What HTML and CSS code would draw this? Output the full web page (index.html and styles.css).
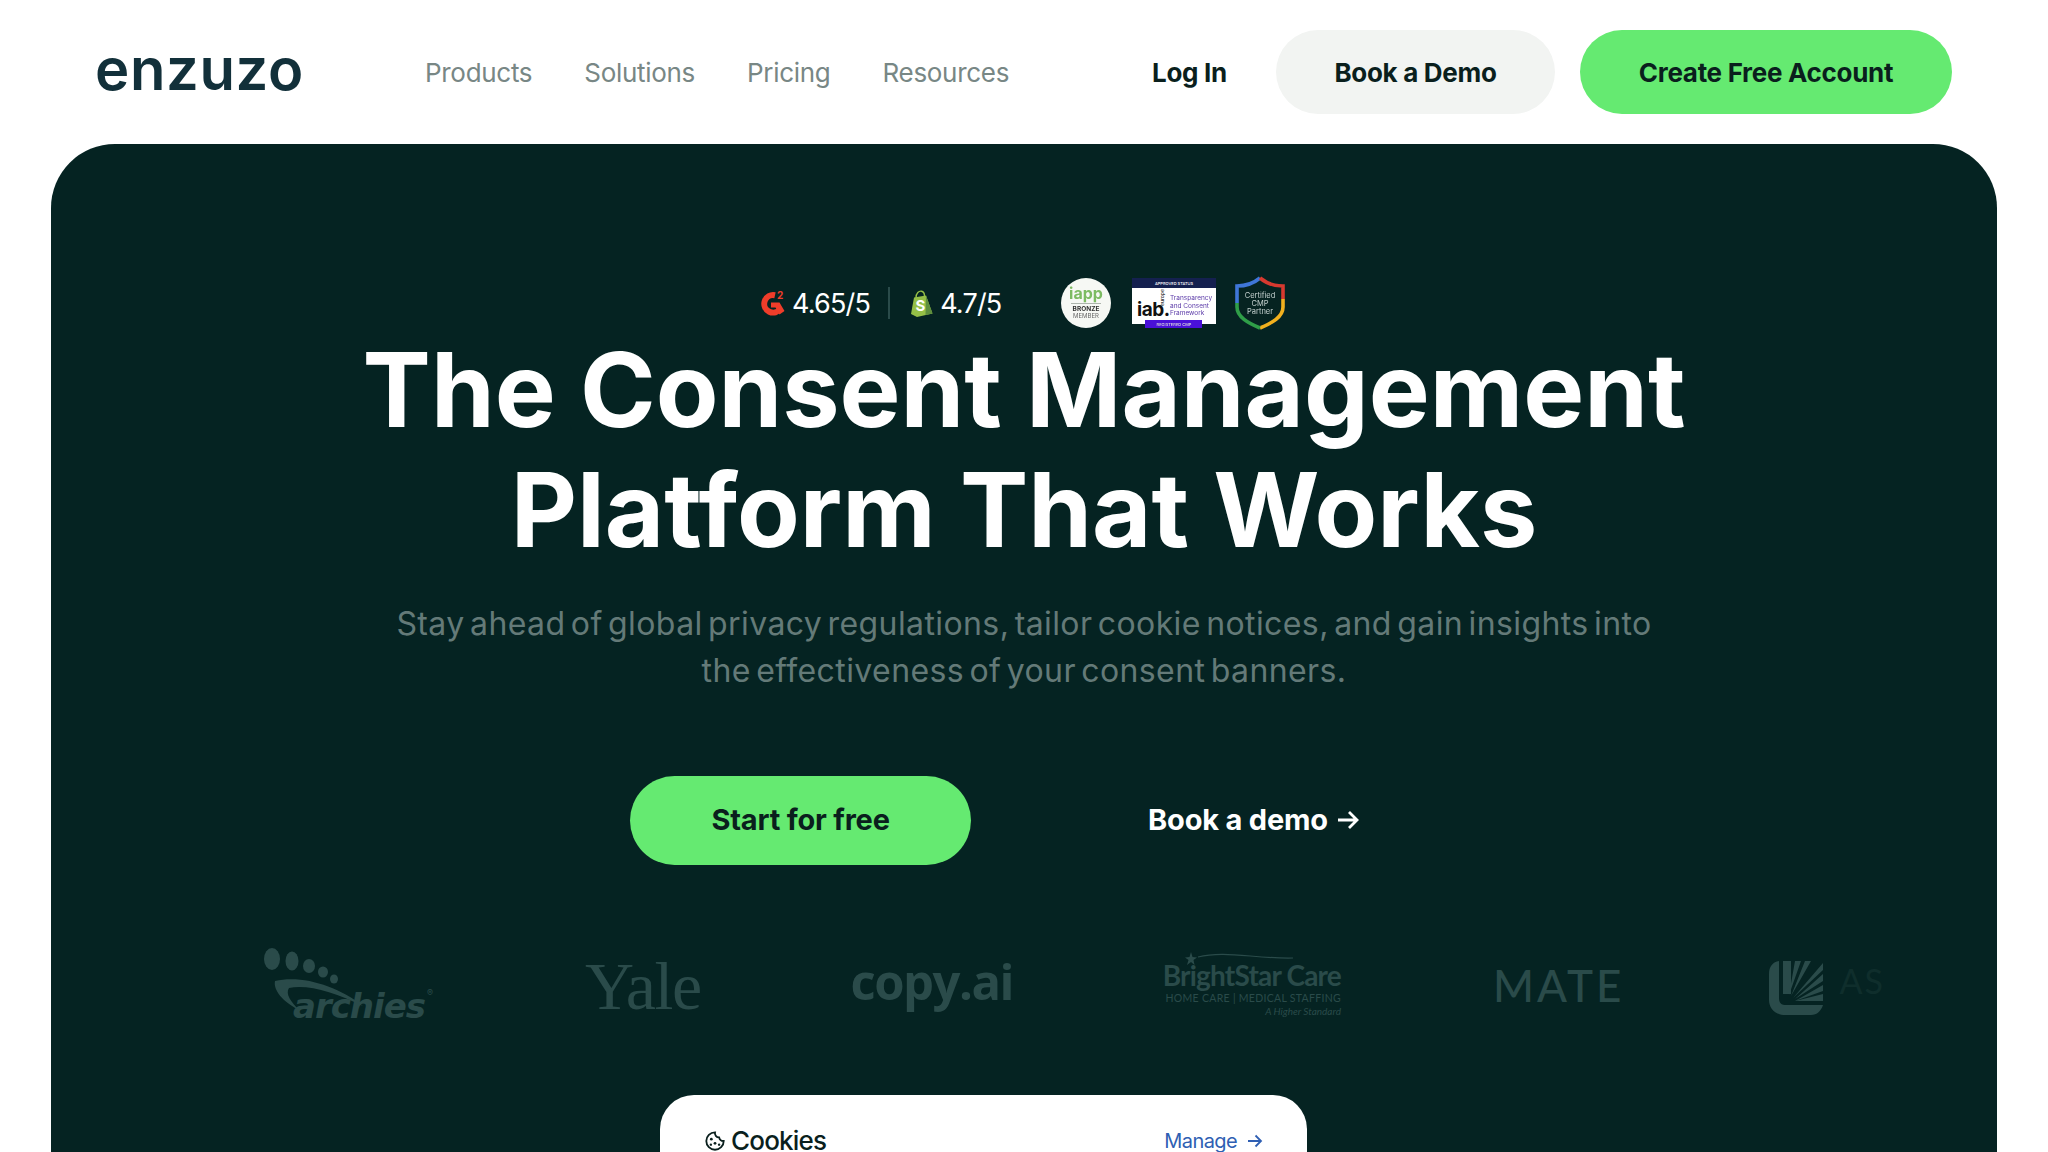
FILE: index.html
```html
<!DOCTYPE html>
<html lang="en">
<head>
<meta charset="utf-8">
<title>Enzuzo</title>
<link rel="stylesheet" href="styles.css">
</head>
<body>
<header class="topbar">
  <a class="logo">enzuzo</a>
  <nav class="mainnav">
    <a>Products</a><a>Solutions</a><a>Pricing</a><a>Resources</a>
  </nav>
  <div class="actions">
    <a class="login">Log In</a>
    <a class="pill pill-grey">Book a Demo</a>
    <a class="pill pill-green">Create Free Account</a>
  </div>
</header>
<main class="hero">
  <div class="ratings">
    <svg class="g2" viewBox="0 0 26 26"><path d="M15 5.200A8.800 8.800 0 1 0 20.500 18.500" fill="none" stroke="#ef3d2a" stroke-width="6"/><path d="M11 12.500h8.500l5 8.500-5 3.500-4-7h-4.500Z" fill="#ef3d2a"/><text x="17" y="9" class="g2-two">2</text></svg>
    <span class="score">4.65/5</span>
    <span class="divider"></span>
    <svg class="shop" viewBox="0 0 24 27"><path d="M2 24 5 7.500 17 5.500 23.500 23.500 8 27Z" fill="#95bf47"/><path d="M17 5.500 23.500 23.500 16.500 25Z" fill="#5e8e3e"/><path d="M7 8C7 3 10 .8 12.500 1.200 15 1.600 15.500 4 15.500 6" fill="none" stroke="#95bf47" stroke-width="1.400"/><text x="6.500" y="21" class="shop-s">S</text></svg>
    <span class="score score-shop">4.7/5</span>
    <svg class="badge iapp" viewBox="0 0 50 50"><circle cx="25" cy="25" r="25" fill="#f6f8f4"/><text x="25" y="21" class="iapp-name">iapp</text><path d="M10 25.500H40" stroke="#9aa39a" stroke-width=".8"/><text x="25" y="33" class="iapp-tier">BRONZE</text><text x="25" y="40" class="iapp-member">MEMBER</text></svg>
    <svg class="badge iab" viewBox="0 0 84 50"><rect width="84" height="10" fill="#14204f"/><text x="42" y="7" class="iab-top">APPROVED STATUS</text><rect y="10" width="84" height="36" fill="#fff"/><text x="5" y="38" class="iab-mark">iab.</text><text x="0" y="0" class="iab-eu" transform="translate(32 28) rotate(-90)">europe</text><text x="38" y="22" class="iab-tcf">Transparency</text><text x="38" y="29.500" class="iab-tcf">and Consent</text><text x="38" y="37" class="iab-tcf">Framework</text><rect x="13" y="42" width="57" height="8" fill="#4a10d8"/><text x="42" y="47.500" class="iab-reg">REGISTERED CMP</text></svg>
    <svg class="badge shield" viewBox="0 0 52 56"><path d="M26 3C20 8 12 11 3 11V32C3 42 14 48 26 53 38 48 49 42 49 32V11C40 11 32 8 26 3Z" fill="#062321"/><g fill="none" stroke-width="3.600"><path d="M26 3C20 8 12 11 3 11V28" stroke="#3f76d8"/><path d="M26 3C32 8 40 11 49 11V24" stroke="#d8392f"/><path d="M49 24V32C49 42 38 48 26 53" stroke="#f2b01e"/><path d="M3 28V32C3 42 14 48 26 53" stroke="#2f9e48"/></g><text x="26" y="23" class="shield-t">Certified</text><text x="26" y="31" class="shield-t">CMP</text><text x="26" y="39" class="shield-t">Partner</text></svg>
  </div>
  <h1 class="headline">The Consent Management<br>Platform That Works</h1>
  <p class="lede">Stay ahead of global privacy regulations, tailor cookie notices, and gain insights into<br>the effectiveness of your consent banners.</p>
  <div class="cta">
    <a class="start">Start for free</a>
    <a class="demo">Book a demo <svg class="demo-arrow" viewBox="0 0 24 22"><path d="M2 11H21M13 3l8 8-8 8" fill="none" stroke="#fff" stroke-width="2.800"/></svg></a>
  </div>
  <div class="logos">
    <svg class="l-archies" viewBox="0 0 172 76">
      <ellipse cx="9" cy="11" rx="8" ry="11"/><ellipse cx="29" cy="13" rx="6.500" ry="9.500"/><ellipse cx="46" cy="18" rx="6" ry="7"/><ellipse cx="60" cy="24" rx="5" ry="5.500"/><ellipse cx="71" cy="31" rx="4" ry="4.500"/>
      <path d="M12 33C40 27 74 38 100 58 72 44 44 36 26 40 22 46 28 54 36 62 20 54 10 42 12 33Z"/>
      <text x="30" y="70" class="archies-t">archies</text>
      <text x="164" y="48" class="archies-r">®</text>
    </svg>
    <span class="l-yale">Yale</span>
    <span class="l-copy">copy.ai</span>
    <div class="l-bright">
      <svg class="bright-star" viewBox="0 0 110 14"><path d="M6 1 7.500 6 12 6.500 8.500 9 9.500 14 6 11 2 14 3.500 9 0 6.500 4.500 6Z"/><path d="M13 6C40-1 70 8 108 7" fill="none" stroke-width="1.200"/></svg>
      <span class="bright-name">BrightStar Care</span>
      <span class="bright-sub">HOME CARE | MEDICAL STAFFING</span>
      <span class="bright-tag">A Higher Standard</span>
    </div>
    <span class="l-mate">MATE</span>
    <div class="l-last">
      <svg class="last-mark" viewBox="0 0 54 57"><path d="M10 3V40C10 47 14 47 20 47H54C52 53 48 57 42 57H16C6 57 0 50 0 42V16C0 8 4 4 10 3Z"/><path d="M14 3H22V36H14ZM26 3H32L20 37ZM36 3H42L22 38ZM54 5V12L24 40ZM54 16V23L26 41ZM54 27V33L26 43ZM54 36V43H26Z"/></svg>
      <span class="last-t">AS</span>
    </div>
  </div>
  <section class="cookie-card">
    <div class="cookie-head">
      <span class="cookie-title"><svg class="cookie-ic" viewBox="0 0 24 24"><path d="M12 2.500A9.500 9.500 0 1 0 21.500 12 5 5 0 0 1 16.500 8 4.500 4.500 0 0 1 12 2.500Z" fill="none" stroke="#0a1f1d" stroke-width="2"/><circle cx="8" cy="10" r="1.500" fill="#0a1f1d"/><circle cx="12" cy="14.500" r="1.500" fill="#0a1f1d"/><circle cx="7.500" cy="16" r="1.300" fill="#0a1f1d"/><circle cx="16.500" cy="16" r="1.300" fill="#0a1f1d"/></svg>Cookies</span>
      <a class="manage">Manage <svg class="manage-arrow" viewBox="0 0 18 16"><path d="M2 8H15M9.500 2.500 15 8l-5.500 5.500" fill="none" stroke="#2f5fb3" stroke-width="1.800"/></svg></a>
    </div>
  </section>
</main>
</body>
</html>
```
FILE: styles.css
```css
* { box-sizing: border-box; }
html, body { margin: 0; height: 1152px; overflow: hidden; background: #fff; }
body { font-family: Inter, "Liberation Sans", sans-serif; color: #0a1f1d; }

.topbar { height: 144px; display: flex; align-items: center; padding: 0 96px 0 95px; }
.logo { font-size: 58px; font-weight: 600; line-height: 60px; letter-spacing: .6px; color: #12303a; width: 330px; margin-top: -6px; }
.mainnav { display: flex; gap: 52px; font-size: 26px; letter-spacing: -.3px; color: #788785; }
.actions { margin-left: auto; display: flex; align-items: center; font-size: 26px; font-weight: 700; letter-spacing: -.3px; color: #0a1f1d; }
.login { margin-right: 49px; }
.pill { height: 84px; border-radius: 42px; display: flex; align-items: center; justify-content: center; }
.pill-grey { width: 279px; background: #f2f4f2; margin-right: 25px; }
.pill-green { width: 372px; background: #65ea71; }

.hero { margin: 0 51px; height: 1200px; background: #052322; border-radius: 64px 64px 0 0; padding-top: 131px; color: #fff; text-align: center; }

.ratings { display: flex; align-items: center; height: 56px; padding-left: 709px; }
.g2 { width: 26px; height: 26px; }
.g2-two { font: 700 10px Inter, sans-serif; fill: #ef3d2a; }
.score { font-size: 27px; margin-left: 6px; letter-spacing: -.8px; }
.divider { width: 2px; height: 32px; background: #2a4b4a; margin: 0 19px 0 18px; }
.shop { width: 24px; height: 27px; }
.shop-s { font: 700 15px Inter, sans-serif; fill: #fff; }
.score-shop { margin-left: 7px; }
.badge { filter: blur(.4px); }
.iapp { width: 50px; height: 50px; margin-left: 60px; }
.iapp-name { font: 700 16px Inter, sans-serif; fill: #7dbb62; text-anchor: middle; }
.iapp-tier { font: 700 6.500px Inter, sans-serif; fill: #333; text-anchor: middle; }
.iapp-member { font: 400 6px Inter, sans-serif; fill: #666; text-anchor: middle; }
.iab { width: 84px; height: 50px; margin-left: 21px; }
.iab-top { font: 500 4px Inter, sans-serif; fill: #fff; text-anchor: middle; }
.iab-mark { font: 700 19px Inter, sans-serif; fill: #111; letter-spacing: -.5px; }
.iab-eu { font: 500 5px Inter, sans-serif; fill: #333; }
.iab-tcf { font: 400 6.500px Inter, sans-serif; fill: #5b3aa8; }
.iab-reg { font: 500 4px Inter, sans-serif; fill: #ddd; text-anchor: middle; }
.shield { width: 52px; height: 56px; margin-left: 18px; }
.shield-t { font: 400 7.500px Inter, sans-serif; fill: #c4d0ce; text-anchor: middle; }

.headline { margin: -1px 0 0; font-size: 102.400px; line-height: 120px; font-weight: 700; }
.lede { margin: 30px 0 0; font-size: 32px; line-height: 47px; letter-spacing: .4px; word-spacing: -4px; color: #647a78; }

.cta { display: flex; align-items: center; justify-content: center; margin-top: 82px; padding-right: 2px; }
.start { width: 341px; height: 89px; border-radius: 45px; background: #65ea71; color: #0a1f1d; font-size: 29px; font-weight: 700; letter-spacing: -.2px; display: flex; align-items: center; justify-content: center; padding-bottom: 2px; }
.demo { margin-left: 177px; margin-right: 56px; font-size: 29px; font-weight: 700; letter-spacing: -.2px; display: flex; align-items: center; gap: 8px; padding-bottom: 2px; }
.demo-arrow { width: 24px; height: 22px; }

.logos { display: flex; align-items: center; gap: 150px; height: 80px; margin: 81px 0 0 212px; text-align: left; color: #2a4b4a; fill: #2a4b4a; stroke: none; }
.l-archies { width: 172px; height: 76px; flex: none; overflow: visible; }
.archies-t { font: italic 700 34px "DejaVu Sans", sans-serif; letter-spacing: -1px; }
.archies-r { font: 400 9px Inter, sans-serif; }
.l-yale { font: 400 68px/1 "Liberation Serif", serif; letter-spacing: -1.500px; flex: none; }
.l-copy { font: 700 49px/1 "Open Sans", sans-serif; letter-spacing: -1.500px; flex: none; margin-top: -10px; }
.l-bright { width: 178px; flex: none; display: flex; flex-direction: column; align-items: flex-end; margin: -4px 2px 0 0; }
.bright-star { width: 110px; height: 14px; margin: 0 46px -6px 0; stroke: #2a4b4a; }
.bright-star path:first-child { stroke: none; }
.bright-name { font: 700 28px/32px Lato, sans-serif; letter-spacing: -.8px; white-space: nowrap; }
.bright-sub { font: 400 10.500px/14px Lato, sans-serif; letter-spacing: .3px; white-space: nowrap; }
.bright-tag { font: italic 400 10px/12px Lato, sans-serif; white-space: nowrap; }
.l-mate { font: 500 44px/1 Lato, sans-serif; letter-spacing: 3px; flex: none; margin-top: -2px; }
.l-last { display: flex; align-items: center; gap: 16px; flex: none; margin-left: -5px; }
.last-mark { width: 54px; height: 57px; }
.last-t { font: 400 34px Lato, sans-serif; color: #0f2e2c; letter-spacing: 2px; margin-top: -12px; }

.cookie-card { width: 647px; height: 200px; margin: 69px 0 0 609px; background: #fff; border-radius: 34px; padding: 30px 43px 0 44px; color: #0a1f1d; text-align: left; }
.cookie-head { display: flex; justify-content: space-between; align-items: center; }
.cookie-title { display: flex; align-items: center; gap: 5px; font-size: 26px; font-weight: 500; letter-spacing: -.8px; }
.cookie-ic { width: 22px; height: 22px; }
.manage { display: flex; align-items: center; gap: 9px; font-size: 20px; font-weight: 400; letter-spacing: -.6px; color: #2f5fb3; }
.manage-arrow { width: 18px; height: 16px; }
```
